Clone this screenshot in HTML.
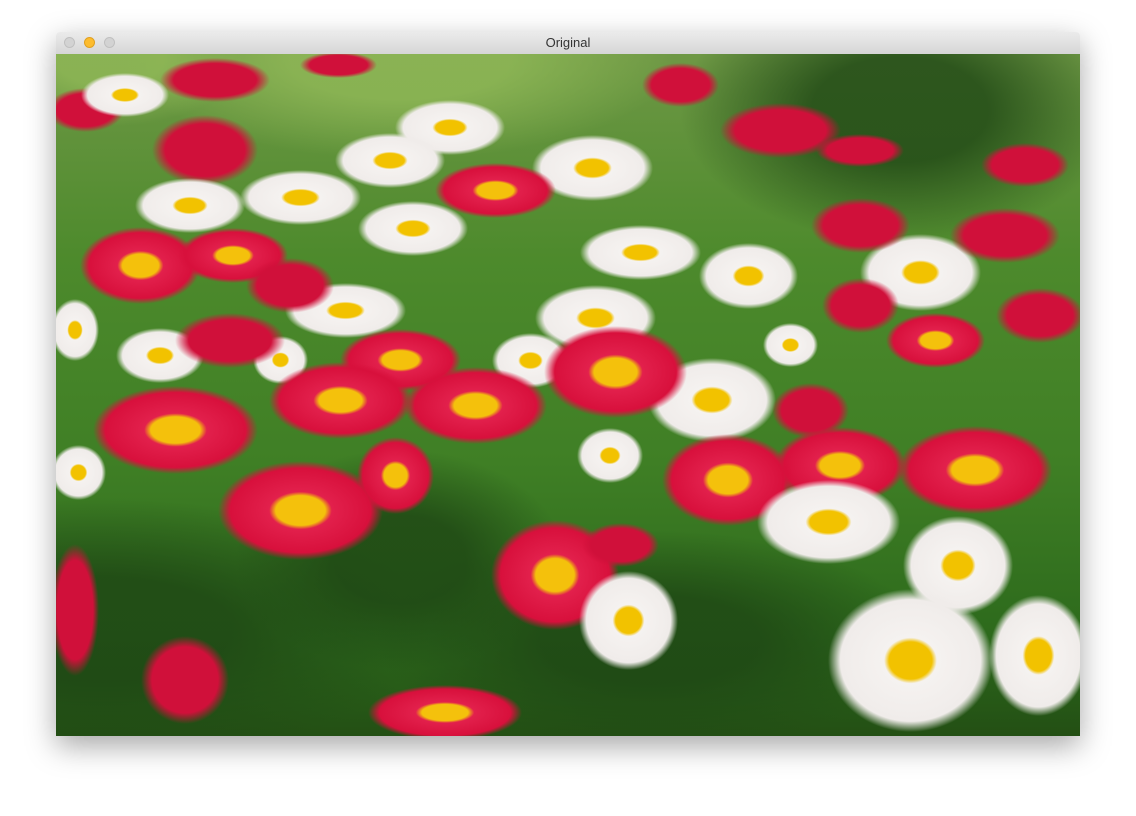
<!DOCTYPE html>
<html><head><style>
body{margin:0;width:1136px;height:816px;background:#fff;position:relative;overflow:hidden;font-family:"Liberation Sans",sans-serif}
.win{position:absolute;left:56px;top:32px;width:1024px;height:704px;box-shadow:0 10px 30px rgba(0,0,0,.35);border-radius:4px 4px 0 0;overflow:hidden}
.tb{height:22px;background:linear-gradient(#ebebeb,#d6d6d6);border-bottom:1px solid #b8b8b8;position:relative;text-align:center;font-size:13px;line-height:22px;color:#333}
.dot{position:absolute;top:5px;width:11px;height:11px;border-radius:50%;background:#d3d3d3;border:1px solid #c0c0c0;box-sizing:border-box}
.img{position:absolute;left:0;top:22px;width:1024px;height:682px;overflow:hidden;
background:linear-gradient(180deg,#6e9845 0%,#4d8a2c 30%,#3f7f25 60%,#2d6a1c 85%,#234f14 100%)}
.img i{position:absolute;display:block}
.w{background:radial-gradient(ellipse closest-side,#f2c200 0 26%,#f5f2f0 32%,#f0ecea 85%,rgba(240,235,235,0) 100%)}
.r{background:radial-gradient(ellipse closest-side,#f4c10c 0 30%,#e2204c 38%,#d8103c 85%,rgba(200,10,50,0) 100%)}
.d{background:radial-gradient(ellipse closest-side,#d0103a 0 75%,rgba(200,10,50,0) 100%)}
.g{background:radial-gradient(ellipse closest-side,rgba(30,70,20,.8) 0 40%,rgba(30,70,20,0) 100%)}
.l{background:radial-gradient(ellipse closest-side,rgba(150,190,90,.7) 0 40%,rgba(150,190,90,0) 100%)}
</style></head><body>
<div class="win">
<div class="tb"><span class="dot" style="left:8px"></span><span class="dot" style="left:28px;background:#fdbc2e;border-color:#e0a020"></span><span class="dot" style="left:48px"></span>Original</div>
<div class="img" id="im"></div>
</div>
<script>
const F=[
['l',400,60,250,90],['l',110,60,120,60],['g',900,110,200,120],['g',100,630,300,120],['g',650,640,250,100],['g',400,560,150,100],
['d',338,65,35,12],['d',680,85,35,20],['d',85,110,35,20],['d',215,80,50,20],['d',205,150,48,32],['d',1025,165,40,20],['d',780,130,55,25],['d',860,150,40,15],
['w',125,95,40,20],['w',450,127,50,25],['w',390,160,50,25],['w',592,168,55,30],['w',300,197,55,25],['w',190,205,50,25],['w',413,228,50,25],['w',640,252,55,25],['w',748,276,45,30],['w',920,272,55,35],['w',345,310,55,25],['w',595,318,55,30],['w',75,330,22,28],['w',160,355,40,25],['w',280,360,25,22],['w',530,360,35,25],['w',790,345,25,20],
['r',495,190,55,25],['d',860,225,45,25],['d',1005,235,50,25],['r',140,265,55,35],['r',233,255,50,25],['d',290,285,40,25],['d',860,305,35,25],['d',1040,315,40,25],['d',230,340,50,25],['r',935,340,45,25],
['w',712,400,58,38],['w',610,455,30,25],['w',78,472,25,25],
['r',400,360,55,28],['r',340,400,65,35],['r',475,405,65,35],['r',615,372,65,42],['r',175,430,75,40],['d',810,410,35,25],['r',840,465,60,35],['r',975,470,70,40],['r',728,480,60,42],['r',395,475,35,35],['r',300,510,75,45],
['w',828,522,65,38],['w',958,565,50,45],['r',555,575,58,50],['d',620,545,35,20],['w',628,620,45,45],['d',75,610,22,60],['w',910,660,75,65],['w',1038,655,45,55],['d',185,680,40,40],['r',445,712,70,25]
];
const im=document.getElementById('im');let h='';
for(const[c,x,y,rx,ry]of F){h+=`<i class="${c}" style="left:${x-56-rx*1.1}px;top:${y-54-ry*1.1}px;width:${rx*2.2}px;height:${ry*2.2}px"></i>`}
im.innerHTML=h;
</script>
</body></html>
